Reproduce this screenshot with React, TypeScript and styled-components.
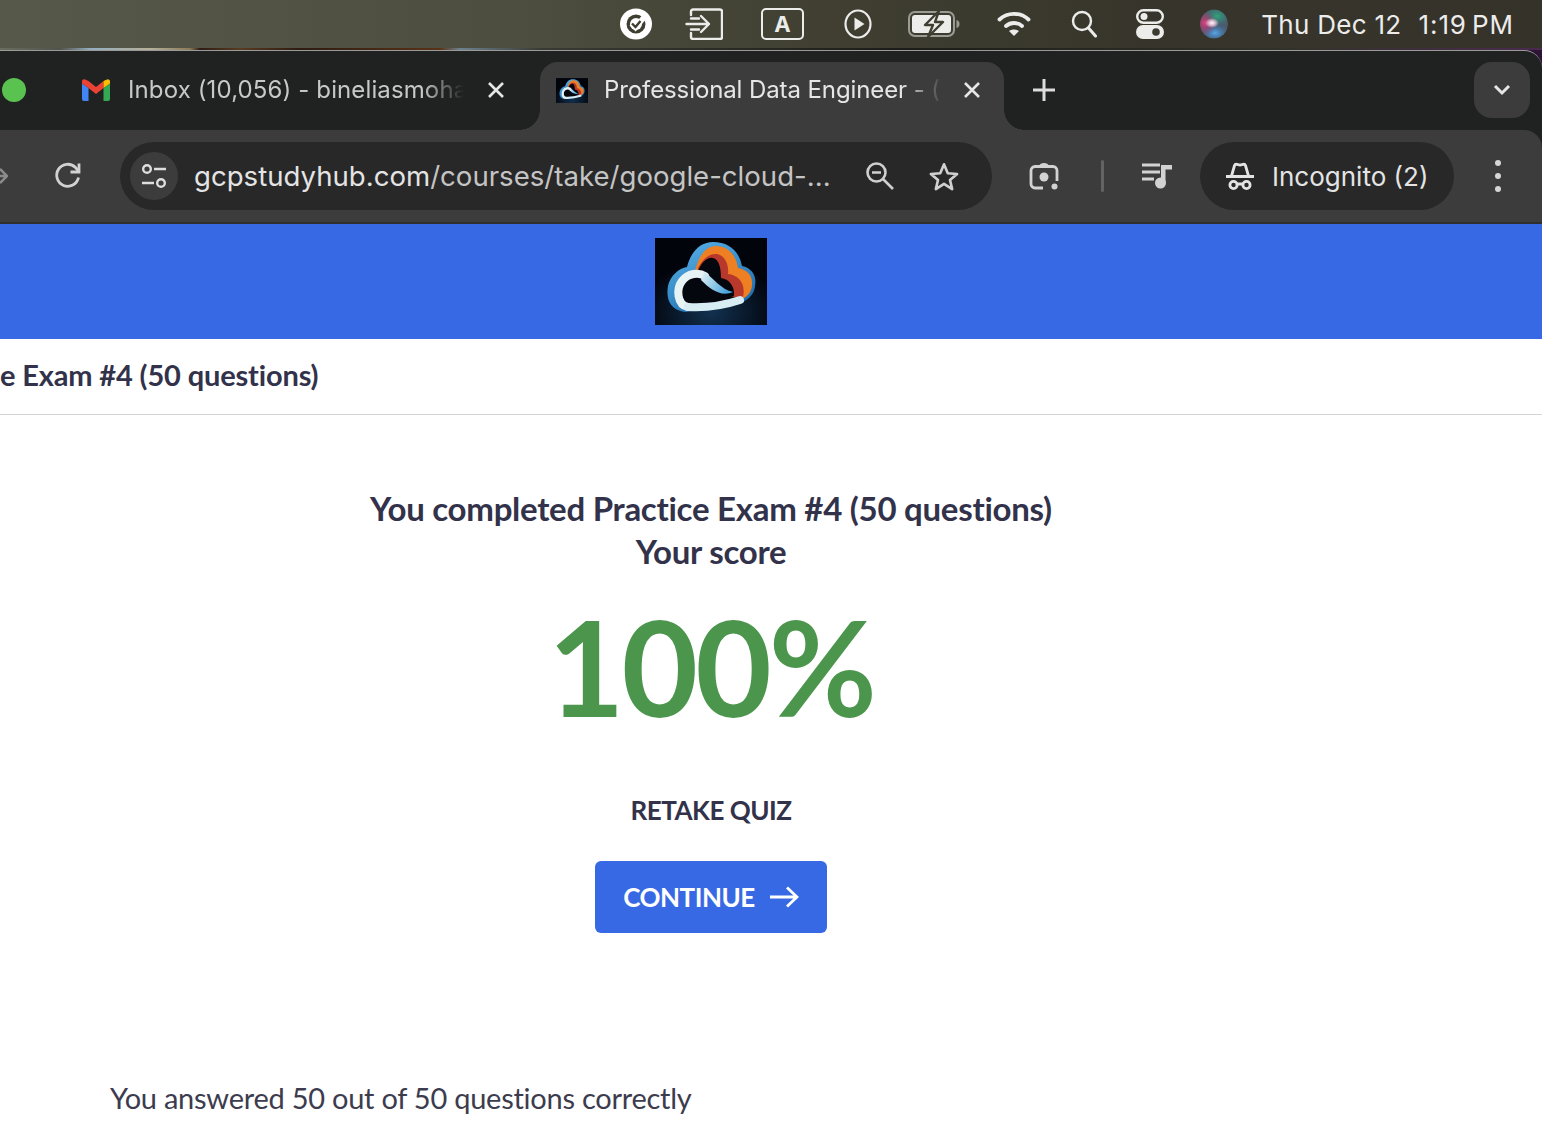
import React from "react"
import styled, { createGlobalStyle } from "styled-components"

const GlobalStyle = createGlobalStyle`
  html, body {
    margin: 0;
    height: 1130px;
    overflow: hidden;
    background: #fff;
    font-family: "Lato", "Liberation Sans", sans-serif;
  }
  * { box-sizing: border-box; }
`

const Page = styled.div`
  display: flex;
  flex-direction: column;
  width: 1542px;
  height: 1130px;
  overflow: hidden;
`

/* mac menu bar */
const MenuBar = styled.header`
  display: flex;
  align-items: center;
  justify-content: flex-end;
  height: 48px;
  padding-right: 28px;
  background: linear-gradient(90deg, #56584a 0%, #4c4d3e 35%, #3f3e31 55%, #37352b 75%, #35322a 100%);
  color: #ececea;
  font-family: "Inter", "Liberation Sans", sans-serif;
`

const MenuIcon = styled.svg<{ $gap?: number }>`
  display: block;
  flex: none;
  margin-left: ${(p) => p.$gap ?? 0}px;
`

const Clock = styled.div`
  display: flex;
  font-size: 26px;
  font-weight: 400;
  letter-spacing: 0.3px;
  margin-left: 33px;
  white-space: nowrap;
`

const ClockTime = styled.span`
  margin-left: 17px;
  letter-spacing: 0.9px;
  word-spacing: -3px;
`

const WallpaperEdge = styled.div`
  height: 2px;
  background: linear-gradient(90deg, #6a6e60 0, #50524c 60px, #93aec0 90px, #b5b09a 150px, #8a7a58 190px, #2c1c14 200px, #5a3a20 240px, #2c1c12 300px, #5a3216 440px, #6d8290 460px, #3a3a34 540px, #1c1c18 900px, #33322a 1300px, #4a2a50 1542px);
`

const Backdrop = styled.div`
  background: #2d1436;
`

const Browser = styled.div`
  border-top: 1px solid #9a9a98;
  border-top-right-radius: 18px;
  background: #202221;
  overflow: hidden;
`

const TabStrip = styled.div`
  position: relative;
  display: flex;
  align-items: flex-start;
  height: 79px;
  padding: 11px 12px 0 2px;
  color: #c8c8c8;
  font-family: "Inter", "Liberation Sans", sans-serif;
  font-size: 24px;
`

const GreenLight = styled.span`
  flex: none;
  width: 24px;
  height: 24px;
  margin-top: 16px;
  border-radius: 50%;
  background: #5ac24f;
`

const Tab = styled.div<{ $active?: boolean }>`
  position: relative;
  flex: none;
  display: flex;
  align-items: flex-start;
  height: 68px;
  padding-top: 16px;
  width: ${(p) => (p.$active ? 464 : 458)}px;
  margin-left: ${(p) => (p.$active ? 0 : 56)}px;
  padding-left: ${(p) => (p.$active ? 16 : 0)}px;
  border-radius: 18px 18px 0 0;
  background: ${(p) => (p.$active ? "#3c3c3c" : "transparent")};
  color: ${(p) => (p.$active ? "#e6e6e6" : "#c8c8c8")};
  letter-spacing: ${(p) => (p.$active ? -0.1 : 0.12)}px;

  ${(p) =>
    p.$active &&
    `
    &::before, &::after {
      content: "";
      position: absolute;
      bottom: 0;
      width: 20px;
      height: 20px;
    }
    &::before {
      left: -20px;
      background: radial-gradient(circle at 0 0, transparent 19.5px, #3c3c3c 20px);
    }
    &::after {
      right: -20px;
      background: radial-gradient(circle at 100% 0, transparent 19.5px, #3c3c3c 20px);
    }
  `}
`

const TabTitle = styled.div<{ $width: number; $gap: number }>`
  width: ${(p) => p.$width}px;
  margin-left: ${(p) => p.$gap}px;
  height: 28px;
  line-height: 24px;
  white-space: nowrap;
  overflow: hidden;
  mask-image: linear-gradient(90deg, #000 calc(100% - 44px), transparent calc(100% - 2px));
`

const TabClose = styled.svg<{ $gap: number }>`
  flex: none;
  display: block;
  margin-left: ${(p) => p.$gap}px;
  margin-top: 3px;
`

const NewTab = styled.svg`
  flex: none;
  display: block;
  margin: 17px 0 0 29px;
`

const TabSearch = styled.div`
  display: flex;
  align-items: center;
  justify-content: center;
  width: 56px;
  height: 56px;
  margin-left: auto;
  border-radius: 18px;
  background: #3c3c3c;
`

const Toolbar = styled.div`
  display: flex;
  align-items: center;
  height: 94px;
  border-top-right-radius: 18px;
  border-bottom: 2px solid #2e2e2e;
  background: #3c3c3c;
  font-family: "Inter", "Liberation Sans", sans-serif;
`

const ToolIcon = styled.svg<{ $gap: number }>`
  flex: none;
  display: block;
  margin-left: ${(p) => p.$gap}px;
`

const AddressBar = styled.div`
  flex: none;
  display: flex;
  align-items: center;
  width: 872px;
  height: 68px;
  margin-left: 38px;
  padding-left: 10px;
  border-radius: 34px;
  background: #282828;
`

const SiteInfo = styled.div`
  flex: none;
  display: flex;
  align-items: center;
  justify-content: center;
  width: 48px;
  height: 48px;
  border-radius: 50%;
  background: #3c3c3c;
`

const Url = styled.div`
  width: 638px;
  margin-left: 16px;
  font-size: 27.6px;
  color: #c4c4c4;
  white-space: nowrap;
`

const UrlHost = styled.span`
  color: #e4e4e4;
`

const Separator = styled.span`
  flex: none;
  width: 3px;
  height: 32px;
  margin-left: 42px;
  border-radius: 2px;
  background: #636363;
`

const ProfilePill = styled.div`
  flex: none;
  display: flex;
  align-items: center;
  width: 254px;
  height: 68px;
  margin-left: 28px;
  padding-left: 26px;
  border-radius: 34px;
  background: #282828;
  color: #e4e4e4;
  font-size: 26px;
`

const ProfileIcon = styled.svg`
  display: block;
  flex: none;
`

const ProfileLabel = styled.span`
  margin-left: 18px;
`

/* page itself, scrolled sideways so its centre sits left of the window's */
const Banner = styled.div`
  flex: none;
  display: flex;
  justify-content: center;
  align-items: flex-start;
  height: 115px;
  padding: 14px 120px 0 0;
  background: #3869e4;
`

const CourseTitle = styled.div`
  flex: none;
  display: flex;
  align-items: center;
  height: 76px;
  padding-bottom: 4px;
  border-bottom: 1px solid #d4d4d8;
  color: #32324a;
  font-size: 29px;
  font-weight: 700;
  letter-spacing: -0.15px;
`

const Summary = styled.main`
  display: flex;
  flex-direction: column;
  align-items: center;
  width: 1422px;
  padding-top: 72px;
  color: #32324a;
`

const Headline = styled.h1`
  margin: 0;
  font-size: 33px;
  font-weight: 700;
  line-height: 43px;
  text-align: center;
  letter-spacing: -0.27px;
`

const Score = styled.div`
  margin-top: 13px;
  font-size: 132px;
  font-weight: 700;
  line-height: 160px;
  letter-spacing: -3px;
  color: #4b964c;
`

const RetakeLink = styled.a`
  margin-top: 46px;
  font-size: 26px;
  font-weight: 700;
  line-height: 36px;
  letter-spacing: -0.5px;
  color: #32324a;
`

const ContinueButton = styled.button`
  display: flex;
  align-items: center;
  justify-content: center;
  gap: 15px;
  width: 232px;
  height: 72px;
  margin-top: 33px;
  border: 0;
  border-radius: 6px;
  background: #3869e4;
  color: #fff;
  font-family: inherit;
  font-size: 26px;
  font-weight: 700;
  letter-spacing: -0.5px;
`

const Answered = styled.p`
  align-self: flex-start;
  margin: 147px 0 0 110px;
  font-size: 29px;
  line-height: 36px;
  letter-spacing: -0.25px;
  color: #3c3c4e;
`

const LogoMark = styled.svg`
  display: block;
  flex: none;
`

const GmailMark = styled.svg`
  display: block;
  flex: none;
  margin-top: 1px;
`

const CloudLogo: React.FC<{ width: number; height: number; id: string }> = ({ width, height, id }) => (
  <LogoMark width={width} height={height} viewBox="0 0 112 87">
    <defs>
      <radialGradient id={`${id}Glow`} cx="50%" cy="85%" r="60%">
        <stop offset="0" stopColor="#12314f" />
        <stop offset="1" stopColor="#02040c" />
      </radialGradient>
      <linearGradient id={`${id}Blue`} x1="0" y1="0" x2="0.6" y2="1">
        <stop offset="0" stopColor="#5cb6ea" />
        <stop offset="1" stopColor="#1f6fb0" />
      </linearGradient>
      <linearGradient id={`${id}Wave`} x1="0" y1="0" x2="1" y2="0.4">
        <stop offset="0" stopColor="#e8f3f6" />
        <stop offset="1" stopColor="#4aa6dc" />
      </linearGradient>
    </defs>
    <rect width="112" height="87" fill={`url(#${id}Glow)`} />
    <path d="M30 74C14 72 11 60 13 48C15 38 24 30 32 29C36 13 46 4 58 4C74 4 84 13 87 28C97 30 102 38 100 48C99 58 92 62 84 66Z" fill={`url(#${id}Blue)`} />
    <path d="M40 33C44 16 52 8 61 8C72 8 81 16 83 30C93 32 98 38 97 48C96 56 90 61 82 63L60 50Z" fill="#ee7f22" />
    <path d="M42 33C46 22 54 15 62 16C71 18 74 28 73 36C84 37 91 46 88 59L78 60L60 50Z" fill="#b9382c" />
    <path d="M43 33C47 24 52 19 58 20C64 21 66 30 66 40C74 41 80 48 79 58L60 58Z" fill="#05070f" />
    <path d="M33 68C24 66 24 50 30 44C36 36 46 37 53 43C60 50 66 56 84 60L86 62Z" fill="#05070f" />
    <path d="M33 69C22 67 21 51 27 43C33 35 44 34 50 38" fill="none" stroke="#e8f3f6" strokeWidth="8" strokeLinecap="round" />
    <path d="M49 34C58 39 66 52 78 54C66 59 56 52 46 42Z" fill={`url(#${id}Wave)`} />
    <path d="M33 69C50 70 70 67 85 62" fill="none" stroke="#d8ecf4" strokeWidth="8" strokeLinecap="round" />
  </LogoMark>
)

const GmailIcon = () => (
  <GmailMark width="28" height="22" viewBox="0 0 28 22">
    <path d="M0 4.500V20a2 2 0 0 0 2 2h4.500V9z" fill="#4285f4" />
    <path d="M21.500 9v13H26a2 2 0 0 0 2-2V4.500z" fill="#34a853" />
    <path d="M21.500 2 14 8 6.500 2 2.500 .3A2 2 0 0 0 0 2.500v2L6.500 9 14 15l7.500-6z" fill="#ea4335" />
    <path d="M21.500 2v7L28 4.500v-2A2 2 0 0 0 25 .6z" fill="#fbbc04" />
  </GmailMark>
)

const CloseGlyph: React.FC<{ gap: number }> = ({ gap }) => (
  <TabClose $gap={gap} width="18" height="18" viewBox="0 0 18 18">
    <path d="M2 2l14 14M16 2 2 16" stroke="#e6e6e6" strokeWidth="2.600" fill="none" />
  </TabClose>
)

export default function App() {
  return (
    <Page>
      <GlobalStyle />
      <MenuBar>
        <MenuIcon width="32" height="32" viewBox="0 0 32 32">
          <ellipse cx="16" cy="16" rx="16" ry="15.500" fill="#fff" />
          <circle cx="16" cy="16" r="9.500" fill="#3f3e31" />
          <circle cx="16" cy="16" r="6" fill="#fff" />
          <path d="M11.500 15.500l4 4L26 7" fill="none" stroke="#fff" strokeWidth="5.500" />
          <path d="M12 15.500l3.500 3.500L20.500 13" fill="none" stroke="#3f3e31" strokeWidth="2.400" />
        </MenuIcon>
        <MenuIcon $gap={33} width="38" height="32" viewBox="0 0 38 32" fill="none" stroke="#ececea" strokeWidth="2.400" strokeLinecap="round" strokeLinejoin="round">
          <path d="M6 7V3.500A2 2 0 0 1 8 1.500H35a2 2 0 0 1 2 2V29a2 2 0 0 1-2 2H8a2 2 0 0 1-2-2V25" />
          <path d="M1.500 16H24M16 8l8 8-8 8M6 10.500H14M6 21.500H14" />
        </MenuIcon>
        <MenuIcon $gap={38} width="43" height="32" viewBox="0 0 43 32">
          <rect x="1" y="1" width="41" height="30" rx="4" fill="none" stroke="#ececea" strokeWidth="2" />
          <text x="21.500" y="24" textAnchor="middle" fontFamily="Inter, sans-serif" fontWeight="700" fontSize="22" fill="#ececea">A</text>
        </MenuIcon>
        <MenuIcon $gap={40} width="28" height="30" viewBox="0 0 28 30">
          <ellipse cx="14" cy="15" rx="12.500" ry="13.500" fill="none" stroke="#ececea" strokeWidth="2.200" />
          <path d="M10.500 8.500 20.500 15 10.500 21.500z" fill="#ececea" />
        </MenuIcon>
        <MenuIcon $gap={36} width="52" height="28" viewBox="0 0 52 28">
          <rect x="1" y="2" width="45" height="24" rx="6" fill="none" stroke="#9b9b95" strokeWidth="2" />
          <rect x="4" y="5" width="39" height="18" rx="3" fill="#ececea" />
          <path d="M48.500 10c2 .5 3 2 3 4s-1 3.500-3 4z" fill="#9b9b95" />
          <path d="M31 1 17 15h8l-5 12 15-15h-8l4-11z" fill="#ececea" stroke="#3f3e31" strokeWidth="2.400" strokeLinejoin="round" />
        </MenuIcon>
        <MenuIcon $gap={37} width="34" height="26" viewBox="0 0 34 26" fill="none" stroke="#ececea" strokeWidth="3.800" strokeLinecap="round">
          <path d="M2.500 8.500C10.500 1 23.500 1 31.500 8.500" />
          <path d="M9 15C13.500 11 20.500 11 25 15" />
          <path d="M17 25l-5-5c3-2 7-2 10 0z" fill="#ececea" stroke="none" />
        </MenuIcon>
        <MenuIcon $gap={40} width="26" height="28" viewBox="0 0 26 28" fill="none" stroke="#ececea" strokeLinecap="round">
          <circle cx="11" cy="11" r="9" strokeWidth="2.400" />
          <path d="M17.500 18 24.500 26" strokeWidth="3" />
        </MenuIcon>
        <MenuIcon $gap={39} width="28" height="30" viewBox="0 0 28 30">
          <rect x="1.200" y="1.200" width="25.600" height="12.600" rx="6.300" fill="none" stroke="#ececea" strokeWidth="2.400" />
          <circle cx="8" cy="7.500" r="3.500" fill="#ececea" />
          <rect y="16" width="28" height="14" rx="7" fill="#ececea" />
          <circle cx="20" cy="23" r="3.800" fill="#3c3b2f" />
        </MenuIcon>
        <MenuIcon $gap={36} width="28" height="30" viewBox="0 0 28 30">
          <defs>
            <radialGradient id="siriPink"><stop offset="0" stopColor="#e0407f" /><stop offset="1" stopColor="#a0305f" stopOpacity="0" /></radialGradient>
            <radialGradient id="siriTeal"><stop offset="0" stopColor="#2fa37a" /><stop offset="1" stopColor="#2f8f78" stopOpacity="0" /></radialGradient>
            <radialGradient id="siriBlue"><stop offset="0" stopColor="#58a6e6" /><stop offset="1" stopColor="#3a7fc8" stopOpacity="0" /></radialGradient>
            <radialGradient id="siriCore"><stop offset="0" stopColor="#fff" /><stop offset="0.5" stopColor="#f0c8e0" stopOpacity="0.8" /><stop offset="1" stopColor="#f0c8e0" stopOpacity="0" /></radialGradient>
            <clipPath id="siriClip"><ellipse cx="14" cy="15" rx="14" ry="14.500" /></clipPath>
          </defs>
          <g clipPath="url(#siriClip)">
            <ellipse cx="14" cy="15" rx="14" ry="14.500" fill="#4a5a6c" />
            <ellipse cx="17" cy="7" rx="14" ry="10" fill="url(#siriTeal)" />
            <ellipse cx="15" cy="24" rx="14" ry="9" fill="url(#siriBlue)" />
            <ellipse cx="5" cy="14" rx="11" ry="13" fill="url(#siriPink)" />
            <ellipse cx="12" cy="14" rx="7" ry="5" fill="url(#siriCore)" />
          </g>
        </MenuIcon>
        <Clock>
          <span>Thu Dec 12</span>
          <ClockTime>1:19 PM</ClockTime>
        </Clock>
      </MenuBar>
      <WallpaperEdge />
      <Backdrop>
        <Browser>
          <TabStrip>
            <GreenLight />
            <Tab>
              <GmailIcon />
              <TabTitle $width={338} $gap={18}>Inbox (10,056) - bineliasmoha</TabTitle>
              <CloseGlyph gap={21} />
            </Tab>
            <Tab $active>
              <CloudLogo id="favicon" width={32} height={25} />
              <TabTitle $width={342} $gap={16}>Professional Data Engineer - (</TabTitle>
              <CloseGlyph gap={17} />
            </Tab>
            <NewTab width="22" height="22" viewBox="0 0 22 22">
              <path d="M11 0v22M0 11h22" stroke="#dcdcdc" strokeWidth="3" />
            </NewTab>
            <TabSearch>
              <svg width="18" height="12" viewBox="0 0 18 12">
                <path d="M2 2l7 7 7-7" fill="none" stroke="#e6e6e6" strokeWidth="3" />
              </svg>
            </TabSearch>
          </TabStrip>
          <Toolbar>
            <ToolIcon $gap={0} width="8" height="16" viewBox="0 0 8 16">
              <path d="M0 1l7 7-7 7M-8 8H7" fill="none" stroke="#8a8a8a" strokeWidth="2.500" />
            </ToolIcon>
            <ToolIcon $gap={46} width="28" height="28" viewBox="0 0 28 28" fill="none" stroke="#d2d2d2" strokeWidth="2.800">
              <path d="M24.500 15.500A11 11 0 1 1 21.500 5.500L25 9.500" />
              <path d="M25 1.500V10H16.500" />
            </ToolIcon>
            <AddressBar>
              <SiteInfo>
                <svg width="26" height="26" viewBox="0 0 26 26" fill="none" stroke="#dedede" strokeWidth="2.400">
                  <circle cx="6" cy="6" r="3.800" />
                  <path d="M13 6H25M1 20H13" />
                  <circle cx="20" cy="20" r="3.800" />
                </svg>
              </SiteInfo>
              <Url>
                <UrlHost>gcpstudyhub.com</UrlHost>/courses/take/google-cloud-...
              </Url>
              <ToolIcon $gap={34} width="28" height="28" viewBox="0 0 28 28" fill="none" stroke="#cfcfcf" strokeWidth="2.600">
                <circle cx="10.500" cy="10.500" r="9" />
                <path d="M6 10.500H15M17 17 27 27" />
              </ToolIcon>
              <ToolIcon $gap={35} width="30" height="30" viewBox="0 0 32 30">
                <path d="M16 2.500l4 9.500 10 .8-7.600 6.500 2.300 9.700L16 23.400l-8.700 5.600 2.300-9.700L2 12.800l10-.8z" fill="none" stroke="#d0d0d0" strokeWidth="2.800" strokeLinejoin="round" />
              </ToolIcon>
            </AddressBar>
            <ToolIcon $gap={37} width="30" height="30" viewBox="0 0 30 30" fill="none" stroke="#d2d2d2" strokeWidth="2.800">
              <path d="M14 27H6a4 4 0 0 1-4-4V9.500a4 4 0 0 1 4-4h18a4 4 0 0 1 4 4V20" />
              <path d="M10 5C11 1 19 1 20 5z" fill="#d2d2d2" stroke="none" />
              <circle cx="15" cy="16" r="4.500" fill="#d2d2d2" stroke="none" />
              <circle cx="25.500" cy="25.500" r="3" fill="#d2d2d2" stroke="none" />
            </ToolIcon>
            <Separator />
            <ToolIcon $gap={38} width="30" height="26" viewBox="0 0 30 26">
              <path d="M0 2H18M0 9H18M0 16H12" stroke="#d2d2d2" strokeWidth="2.800" />
              <path d="M19 2H30V6.500H23.500V20H19z" fill="#d2d2d2" />
              <circle cx="18.500" cy="20" r="5.500" fill="#d2d2d2" />
            </ToolIcon>
            <ProfilePill>
              <ProfileIcon width="28" height="28" viewBox="0 0 28 28" fill="none" stroke="#e4e4e4" strokeWidth="2.800">
                <path d="M0 14.500H28M5.500 14 8.500 3.500Q9 2 11 2.300L14 3 17 2.300Q19 2 19.500 3.500L22.500 14" />
                <circle cx="7.500" cy="23" r="3.600" />
                <circle cx="20.500" cy="23" r="3.600" />
                <path d="M11 22H17" />
              </ProfileIcon>
              <ProfileLabel>Incognito (2)</ProfileLabel>
            </ProfilePill>
            <ToolIcon $gap={41} width="6" height="32" viewBox="0 0 6 32" fill="#d6d6d6">
              <circle cx="3" cy="3" r="3" />
              <circle cx="3" cy="16" r="3" />
              <circle cx="3" cy="29" r="3" />
            </ToolIcon>
          </Toolbar>
        </Browser>
      </Backdrop>
      <Banner>
        <CloudLogo id="banner" width={112} height={87} />
      </Banner>
      <CourseTitle>e Exam #4 (50 questions)</CourseTitle>
      <Summary>
        <Headline>
          You completed Practice Exam #4 (50 questions)
          <br />
          Your score
        </Headline>
        <Score>100%</Score>
        <RetakeLink>RETAKE QUIZ</RetakeLink>
        <ContinueButton>
          CONTINUE
          <svg width="29" height="22" viewBox="0 0 29 22" fill="none" stroke="#fff" strokeWidth="2.800">
            <path d="M0 11H27M17 1.500 27 11 17 20.500" />
          </svg>
        </ContinueButton>
        <Answered>You answered 50 out of 50 questions correctly</Answered>
      </Summary>
    </Page>
  )
}
